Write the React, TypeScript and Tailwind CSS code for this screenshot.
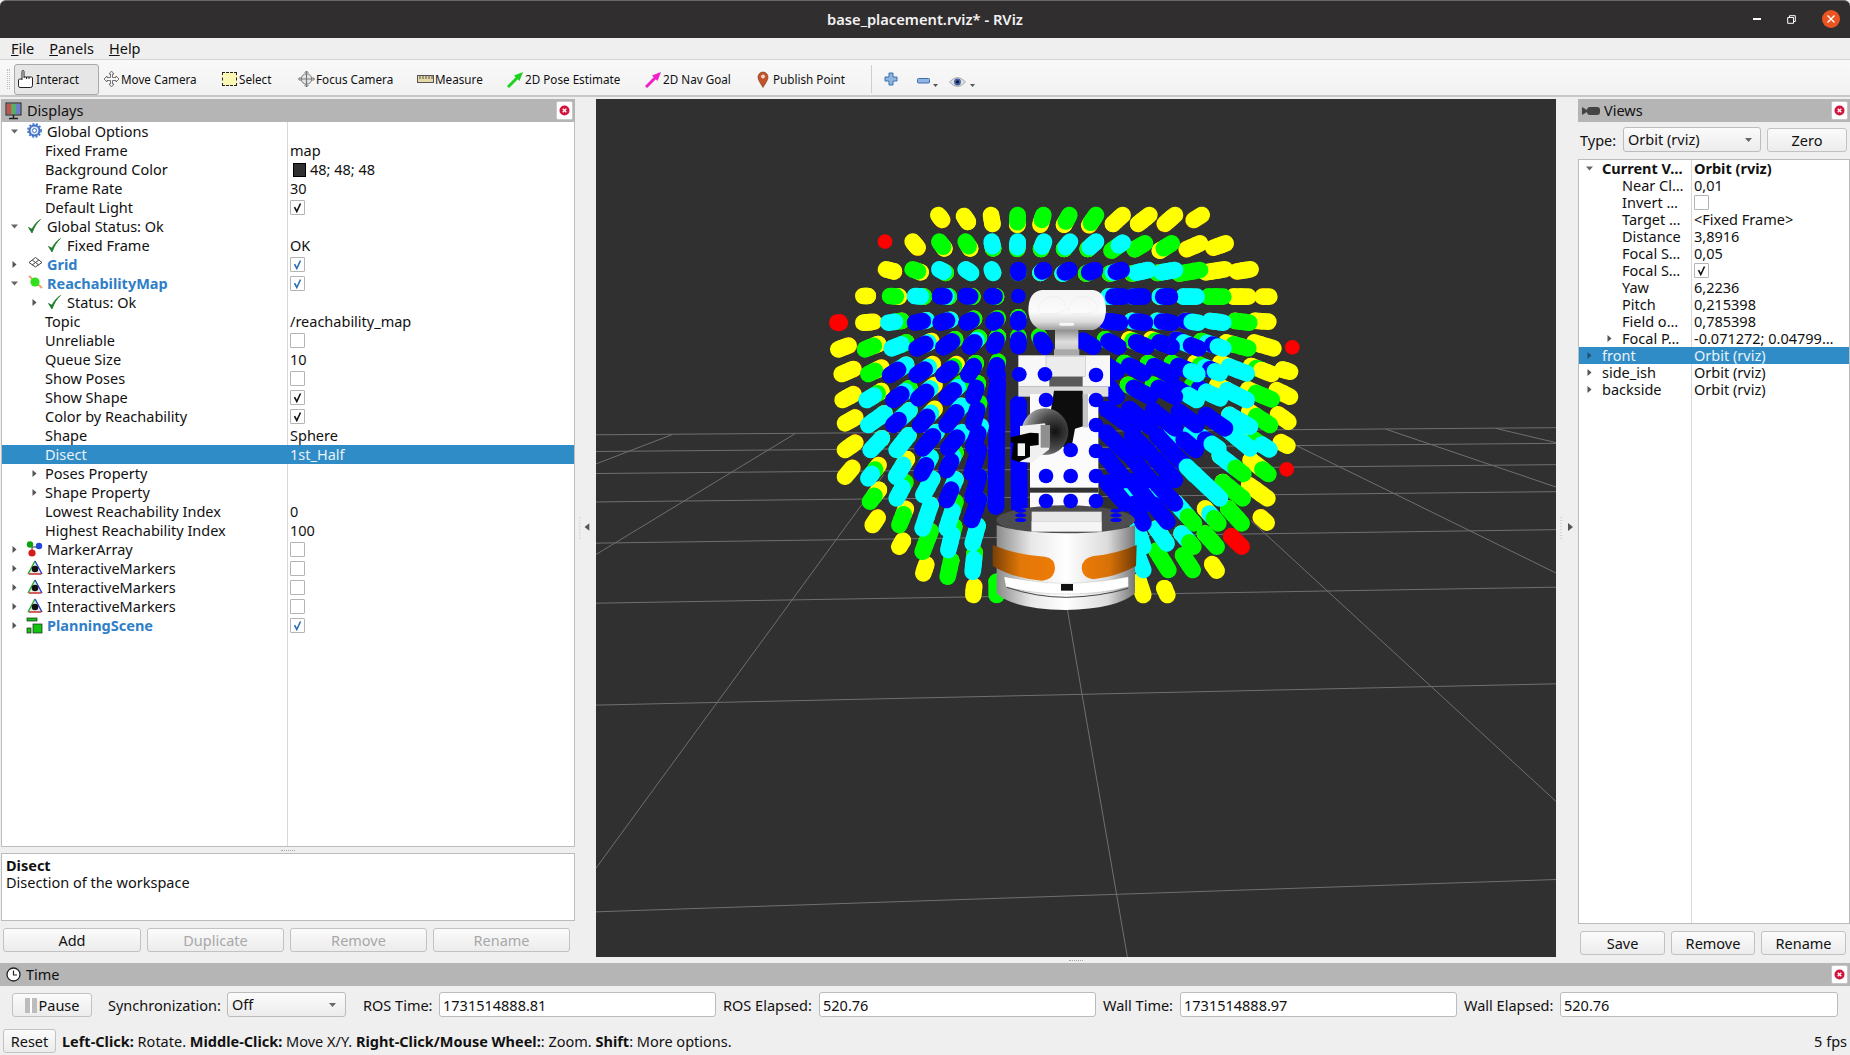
import { ReactNode } from "react";

// capsules are [frontX, frontY, backX, backY, colours back to front], in a 3x space of the 3d view
type Cap = [number, number, number, number, string];

const CAPS: Cap[] = [
  [415, 75, 428, 92, "ryyy"], [492, 78, 505, 98, "yyyy"], [573, 75, 578, 105, "yyy"], [653, 75, 652, 108, "yyggg"],
  [730, 75, 720, 108, "ryygg"], [808, 75, 790, 108, "yygg"], [888, 75, 865, 110, "ryggg"], [968, 75, 935, 105, "yyyy"],
  [1048, 75, 1010, 105, "yyyy"], [1125, 75, 1090, 105, "ryyy"], [1205, 75, 1178, 92, "ry"],
  [255, 155, 255, 155, "r"], [338, 155, 355, 175, "ryyy"], [418, 155, 435, 178, "yyggg"], [497, 155, 512, 178, "yygg"],
  [575, 155, 580, 178, "ygcc"], [653, 155, 652, 180, "rgccc"], [732, 155, 722, 180, "ygcc"], [810, 155, 790, 180, "ygccc"],
  [888, 155, 860, 180, "ygccc"], [968, 158, 930, 185, "rggc"], [1035, 160, 1000, 180, "yggg"], [1115, 160, 1075, 185, "yygg"],
  [1200, 160, 1155, 180, "ryyy"], [1277, 160, 1235, 175, "ryyy"],
  [258, 238, 285, 245, "yyyy"], [338, 238, 365, 248, "yygg"], [418, 238, 440, 250, "ygcc"], [497, 238, 515, 250, "gccc"],
  [575, 238, 580, 250, "gcc"], [655, 240, 655, 250, "gb"], [732, 240, 720, 250, "ycb"], [808, 240, 785, 252, "ycbb"],
  [885, 240, 855, 252, "ygbb"], [965, 240, 925, 252, "ygcbb"], [1045, 240, 990, 252, "ygccc"], [1125, 240, 1065, 250, "ygccc"],
  [1200, 240, 1130, 252, "yggg"], [1275, 238, 1210, 248, "yyyy"], [1352, 238, 1305, 245, "ryyy"],
  [190, 318, 205, 318, "yyyy"], [270, 318, 300, 320, "yygg"], [345, 318, 375, 320, "ygcc"], [420, 318, 450, 320, "ygcbb"],
  [497, 318, 520, 320, "ygbb"], [575, 318, 590, 320, "ygbb"], [655, 318, 655, 318, "b"], [968, 320, 920, 320, "ycbb"],
  [1030, 320, 995, 320, "cbb"], [1110, 320, 1075, 320, "ycbb"], [1190, 320, 1145, 320, "ccc"], [1270, 320, 1220, 320, "ggg"],
  [1345, 320, 1295, 320, "yyy"], [1408, 320, 1385, 320, "ry"],
  [112, 398, 120, 398, "rr"], [190, 398, 225, 395, "ryyy"], [265, 398, 310, 392, "ygc"], [345, 398, 385, 390, "ycbb"],
  [422, 398, 455, 388, "ycbb"], [500, 398, 525, 385, "ygbb"], [580, 398, 595, 383, "rgbb"], [655, 398, 655, 380, "ygbb"],
  [960, 398, 910, 392, "ybb"], [1035, 398, 990, 392, "ycbb"], [1115, 398, 1065, 392, "ycbb"], [1195, 398, 1150, 392, "ybc"],
  [1270, 398, 1225, 392, "rccc"], [1348, 398, 1300, 392, "yggg"], [1405, 395, 1360, 392, "yyy"],
  [115, 478, 150, 465, "ryyy"], [195, 478, 240, 460, "yygg"], [275, 475, 325, 455, "ygcc"], [350, 475, 400, 450, "rycbbb"],
  [430, 472, 470, 445, "ygbbb"], [510, 470, 540, 440, "ygcbb"], [582, 468, 595, 437, "ygbb"], [655, 468, 655, 435, "rgbb"],
  [735, 470, 715, 435, "rgbb"], [880, 470, 845, 450, "bbb"], [955, 470, 910, 445, "ygbbb"], [1040, 470, 980, 445, "rygbbb"],
  [1115, 470, 1045, 445, "rygbbb"], [1195, 475, 1120, 445, "ybcb"], [1270, 475, 1195, 450, "ygcbc"], [1345, 475, 1270, 455, "yygg"],
  [1420, 475, 1355, 455, "ryyy"], [1477, 472, 1477, 472, "r"],
  [125, 552, 165, 535, "ryyy"], [205, 552, 250, 530, "ryygg"], [270, 555, 325, 520, "ycb"], [350, 555, 405, 518, "rycbb"],
  [430, 555, 475, 518, "rygbbb"], [505, 555, 530, 515, "ygbbb"], [585, 548, 595, 510, "rgbb"], [950, 545, 910, 520, "bb"],
  [1030, 550, 965, 515, "ygbbb"], [1115, 555, 1035, 515, "ygbbb"], [1192, 552, 1105, 515, "ygbbc"], [1260, 550, 1175, 515, "rygcbc"],
  [1340, 550, 1250, 515, "rycc"], [1415, 552, 1345, 525, "yygyy"], [1470, 545, 1445, 538, "yyy"],
  [128, 630, 165, 610, "ryyy"], [200, 630, 250, 600, "yygcc"], [280, 630, 335, 590, "ygcbb"], [355, 625, 410, 580, "rycbb"],
  [440, 622, 490, 575, "ygcbb"], [520, 620, 535, 575, "ygbb"], [585, 625, 595, 575, "rbbb"], [950, 620, 915, 575, "bb"],
  [1050, 620, 975, 580, "ygbbb"], [1125, 620, 1050, 580, "ygbbb"], [1190, 630, 1105, 580, "ybbc"], [1260, 625, 1165, 580, "rgbcc"],
  [1340, 630, 1240, 580, "yycc"], [1415, 628, 1335, 595, "yygg"], [1470, 620, 1425, 598, "ryy"],
  [135, 700, 170, 680, "ryyy"], [205, 705, 260, 665, "yccc"], [280, 705, 335, 655, "yccb"], [360, 705, 410, 650, "rycbb"],
  [440, 705, 490, 640, "ycbb"], [520, 700, 540, 630, "rgbb"], [1000, 715, 910, 650, "bbb"], [1050, 710, 980, 650, "bbb"],
  [1125, 715, 1050, 655, "bbb"], [1190, 705, 1130, 660, "bbb"], [1275, 715, 1210, 670, "bbb"], [1350, 710, 1280, 670, "ycc"],
  [1410, 705, 1340, 660, "yygg"], [1465, 695, 1430, 670, "ryy"],
  [135, 780, 170, 755, "ryyy"], [212, 780, 250, 740, "ycc"], [290, 780, 330, 730, "yccc"], [368, 775, 415, 720, "ycbbb"],
  [445, 775, 490, 720, "rcbb"], [520, 770, 545, 700, "rcbb"], [980, 790, 910, 720, "bbb"], [1050, 790, 990, 730, "bbb"],
  [1125, 795, 1065, 730, "bbb"], [1187, 780, 1105, 710, "ycb"], [1255, 775, 1165, 715, "rccbc"], [1350, 775, 1260, 700, "ycc"],
  [1408, 778, 1330, 730, "yygc"], [1462, 767, 1440, 755, "ry"],
  [135, 860, 160, 830, "ryy"], [205, 865, 240, 820, "rygc"], [288, 860, 325, 800, "yycc"], [365, 850, 395, 795, "gcb"],
  [440, 840, 470, 780, "ygcbb"], [515, 850, 540, 770, "rbb"], [975, 870, 910, 790, "bb"], [1050, 870, 985, 790, "bb"],
  [1125, 870, 1060, 800, "bbb"], [1185, 855, 1130, 800, "bbc"], [1330, 852, 1250, 790, "yccg"], [1405, 852, 1345, 805, "yyyg"],
  [1460, 838, 1460, 838, "r"],
  [210, 935, 240, 895, "yyg"], [290, 925, 320, 870, "rgcc"], [370, 915, 400, 860, "ycc"], [440, 930, 470, 860, "ycb"],
  [518, 920, 540, 850, "gbb"], [975, 940, 915, 870, "bb"], [1050, 940, 990, 865, "bb"], [1125, 940, 1065, 875, "bb"],
  [1182, 1000, 1120, 930, "yccg"], [1260, 925, 1170, 840, "gcc"], [1328, 925, 1260, 870, "yggg"], [1402, 925, 1340, 880, "ryyy"],
  [218, 1005, 235, 980, "ryy"], [298, 1005, 320, 950, "rygg"], [368, 1015, 395, 935, "ycc"], [440, 1015, 470, 925, "rgcc"],
  [515, 990, 540, 920, "gbb"], [1030, 1000, 985, 900, "ycbb"], [1102, 995, 1010, 880, "ycb"], [1255, 1000, 1210, 950, "yycg"],
  [1325, 1000, 1280, 950, "yggg"], [1400, 998, 1380, 980, "ry"],
  [298, 1070, 310, 1050, "yy"], [368, 1085, 395, 1015, "rggg"], [445, 1080, 465, 1000, "ygcc"], [518, 1060, 535, 1000, "gcc"],
  [1030, 1070, 1010, 1010, "ycc"], [1100, 1060, 1065, 1010, "ycc"], [1180, 1070, 1140, 1025, "yccg"], [1250, 1070, 1210, 1025, "yggg"],
  [1325, 1070, 1290, 1035, "rrr"],
  [370, 1150, 380, 1120, "ryy"], [443, 1160, 455, 1105, "ygg"], [518, 1145, 525, 1080, "ygcc"], [1030, 1140, 1010, 1090, "cc"],
  [1105, 1140, 1065, 1075, "yggg"], [1178, 1140, 1145, 1090, "rggg"], [1250, 1142, 1235, 1120, "ry"],
  [520, 1215, 523, 1185, "ryy"], [590, 1215, 590, 1170, "gg"], [1030, 1215, 1015, 1170, "yyy"], [1102, 1215, 1092, 1192, "yy"],
  [588, 950, 593, 500, "bbb"], [658, 950, 655, 600, "bbb"],
];

const COLORS: Record<string, string> = { r: "#ff0000", y: "#ffff00", g: "#00ff00", c: "#00ffff", b: "#0000ff" };

const SORTED = [...CAPS].sort(
  (a, b) => Math.hypot(b[0] - 655, b[1] - 400) - Math.hypot(a[0] - 655, a[1] - 400)
);

const GRID_LINES = [
  [0, 98, 1568, 78], [0, 145, 1568, 122], [0, 207, 1568, 182], [0, 287, 1568, 258], [0, 403, 1568, 365],
  [0, 572, 1568, 527], [0, 859, 1568, 799], [0, 1441, 1568, 1350], [770, 590, 868, 1568], [0, 1318, 470, 210],
  [0, 435, 325, 95], [0, 180, 125, 97], [1070, 340, 1568, 1130], [1140, 125, 1568, 487], [1290, 82, 1568, 245],
  [1470, 80, 1568, 120],
];

const OVERLAY_DOTS = [
  [658, 553], [735, 553], [888, 555], [738, 630], [888, 630], [888, 705], [812, 780], [888, 783],
  [738, 858], [812, 858], [888, 858], [738, 933], [812, 933], [888, 933],
];

const Capsule = ({ c }: { c: Cap }) => {
  const [fx, fy, rawBx, rawBy, cols] = c;
  const n = cols.length;
  // the tail is pulled in a little, the wider stroke makes up for it
  const bx = fx + (rawBx - fx) * 0.88;
  const by = fy + (rawBy - fy) * 0.88;
  return (
    <g strokeWidth={n === 1 ? 44 : 50} strokeLinecap="round" fill="none">
      {cols.split("").map((k, i) => {
        const t0 = n === 1 ? 1 : Math.max(i - 1, 0) / (n - 1);
        const t1 = n === 1 ? 1 : i / (n - 1);
        return (
          <line
            key={i}
            x1={bx + (fx - bx) * t0}
            y1={by + (fy - by) * t0}
            x2={bx + (fx - bx) * t1}
            y2={by + (fy - by) * t1}
            stroke={COLORS[k]}
          />
        );
      })}
    </g>
  );
};

const Robot = () => (
  <g>
    <defs>
      <linearGradient id="headG" x1="0" y1="0" x2="0" y2="1">
        <stop offset="0" stopColor="#f4f4f4" />
        <stop offset="0.55" stopColor="#fbfbfb" />
        <stop offset="0.8" stopColor="#dadada" />
        <stop offset="1" stopColor="#9c9c9c" />
      </linearGradient>
      <linearGradient id="neckG" x1="0" y1="0" x2="0" y2="1">
        <stop offset="0" stopColor="#8c8c8c" />
        <stop offset="0.5" stopColor="#dedede" />
        <stop offset="1" stopColor="#bdbdbd" />
      </linearGradient>
      <linearGradient id="baseG" x1="0" y1="0" x2="1" y2="0">
        <stop offset="0" stopColor="#8b8b8b" />
        <stop offset="0.25" stopColor="#e8e8e8" />
        <stop offset="0.5" stopColor="#ffffff" />
        <stop offset="0.8" stopColor="#dcdcdc" />
        <stop offset="1" stopColor="#777777" />
      </linearGradient>
      <linearGradient id="orangeL" x1="0" y1="0" x2="1" y2="0">
        <stop offset="0" stopColor="#7a3f05" />
        <stop offset="0.45" stopColor="#e27808" />
        <stop offset="1" stopColor="#ee7b06" />
      </linearGradient>
      <linearGradient id="orangeR" x1="0" y1="0" x2="1" y2="0">
        <stop offset="0" stopColor="#ee7b06" />
        <stop offset="0.5" stopColor="#d77206" />
        <stop offset="1" stopColor="#6e3905" />
      </linearGradient>
      <radialGradient id="armG" cx="0.72" cy="0.5" r="0.72">
        <stop offset="0" stopColor="#111" />
        <stop offset="0.5" stopColor="#4a4a4a" />
        <stop offset="0.85" stopColor="#8e8e8e" />
        <stop offset="1" stopColor="#c4c4c4" />
      </radialGradient>
    </defs>
    {/* head and neck */}
    <rect x={765} y={418} width={70} height={75} fill="url(#neckG)" />
    <path d="M725 300H880Q918 305 918 362Q915 408 880 420H725Q688 408 685 362Q685 305 725 300Z" fill="url(#headG)" />
    <path d="M715 358Q720 320 765 320Q795 325 798 358Q785 372 730 372Q718 370 715 358Z" fill="none" stroke="#c9c9c9" strokeDasharray="2 2" />
    <path d="M805 358Q815 320 855 320Q890 325 892 358Q885 372 825 372Q810 370 805 358Z" fill="none" stroke="#c9c9c9" strokeDasharray="2 2" />
    <rect x={778} y={398} width={44} height={9} rx={4} fill="#f7f7f7" />
    <rect x={762} y={478} width={76} height={18} fill="#a9a9a9" />
    {/* torso */}
    <rect x={655} y={496} width={275} height={94} fill="#f7f7f7" />
    <rect x={738} y={500} width={118} height={60} fill="#ececec" stroke="#999" />
    <rect x={748} y={560} width={100} height={30} fill="#5a5a5a" />
    <rect x={655} y={590} width={270} height={30} fill="#dcdcdc" />
    <rect x={690} y={612} width={205} height={358} fill="#fbfbfb" />
    <rect x={690} y={893} width={205} height={15} fill="#333" />
    <rect x={692} y={968} width={210} height={55} fill="#e4e4e4" />
    <rect x={695} y={1000} width={205} height={24} fill="#f3f3f3" stroke="#aaa" />
    {/* arm */}
    <path d="M762 602H848L852 708L825 716L815 770H775L740 740Z" fill="#0d0d0d" />
    <rect x={848} y={612} width={16} height={100} fill="#c4c4c4" />
    <ellipse cx={735} cy={725} rx={70} ry={70} fill="url(#armG)" />
    <path d="M660 708L735 700L748 778L695 818L660 815Z" fill="#f0f0f0" />
    <rect x={722} y={705} width={28} height={68} fill="#8f8f8f" />
    <path d="M632 742L690 728L716 730V765L690 768V800L655 816L635 808L640 760L632 755Z" fill="#000" />
    <rect x={653} y={760} width={22} height={38} fill="#f2f2f2" />
    {/* base */}
    <ellipse cx={797} cy={990} rx={208} ry={44} fill="#4d4d4d" />
    <path d="M590 1005Q660 1030 797 1030Q935 1030 1005 1005V1210Q950 1258 797 1260Q640 1258 590 1210Z" fill="url(#baseG)" />
    <rect x={695} y={965} width={210} height={58} fill="#e6e6e6" />
    <rect x={695} y={995} width={210} height={30} fill="#f5f5f5" stroke="#bbb" />
    <path d="M578 1065Q660 1098 735 1100Q765 1105 765 1135Q762 1170 725 1172Q640 1165 578 1128Z" fill="url(#orangeL)" />
    <path d="M1010 1065Q950 1092 880 1098Q845 1105 845 1135Q848 1165 880 1168Q950 1160 1008 1128Z" fill="url(#orangeR)" />
    <path d="M612 1160Q720 1180 800 1180Q900 1178 985 1160V1190Q900 1212 800 1212Q700 1212 618 1190Z" fill="#fff" stroke="#777" strokeDasharray="3 2" />
    <path d="M620 1192Q710 1222 800 1222Q900 1220 985 1195" fill="none" stroke="#444" strokeWidth={3} />
    <rect x={783} y={1182} width={36} height={20} fill="#111" />
    {[962, 976, 990].map((y) => (
      <g key={y}>
        <ellipse cx={662} cy={y} rx={17} ry={6} fill="#0000ff" />
        <ellipse cx={948} cy={y} rx={17} ry={6} fill="#0000ff" />
      </g>
    ))}
  </g>
);

const Scene = () => (
  <svg width={960} height={858} viewBox="0 0 960 858" className="block">
    <g transform="translate(0,301) scale(0.6122,0.3552)" stroke="#6f6f6f" fill="none">
      {GRID_LINES.map((l, i) => (
        <line key={i} x1={l[0]} y1={l[1]} x2={l[2]} y2={l[3]} vectorEffect="non-scaling-stroke" />
      ))}
    </g>
    <g transform="translate(204,91) scale(0.33333)">
      {SORTED.map((c, i) => (
        <Capsule key={i} c={c} />
      ))}
      <Robot />
      {OVERLAY_DOTS.map((d, i) => (
        <circle key={i} cx={d[0]} cy={d[1]} r={22} fill="#0000ff" />
      ))}
    </g>
  </svg>
);

const CloseBtn = () => (
  <span className="flex h-[19px] w-[17px] items-center justify-center rounded-[2px] border border-[#c8c8c8] bg-white">
    <svg width="11" height="11" viewBox="0 0 11 11">
      <circle cx="5.5" cy="5.5" r="5" fill="#d3143c" />
      <path d="M3.7 3.7l3.6 3.6M7.3 3.7L3.7 7.3" stroke="#fff" strokeWidth="1.3" />
    </svg>
  </span>
);

const Arrow = ({ open, light }: { open?: boolean; light?: boolean }) =>
  open ? (
    <svg width="9" height="9" viewBox="0 0 9 9">
      <path d="M1 2.5h7L4.5 6.5z" fill="#666" />
    </svg>
  ) : (
    <svg width="9" height="9" viewBox="0 0 9 9">
      <path d="M2.5 1v7L6.5 4.5z" fill={light ? "#1f4f73" : "#555"} />
    </svg>
  );

const Tick = () => (
  <svg width="15" height="17" viewBox="0 0 15 17">
    <path d="M1.5 9.5L5 15C7 9.5 9.5 5 13.5 1.5C9.5 4 6.8 7.5 5 11.2z" fill="#1c7a26" stroke="#1c7a26" strokeWidth="0.8" />
  </svg>
);

const Box = ({ on, blue }: { on?: boolean; blue?: boolean }) => (
  <span className="flex h-[15px] w-[15px] items-center justify-center rounded-[1px] border border-[#b4b4b4] bg-white">
    {on && (
      <svg width="11" height="11" viewBox="0 0 11 11">
        <path d="M2.5 5.2L4.8 9.5L8.5 1.5" fill="none" stroke={blue ? "#2c6fb3" : "#111"} strokeWidth="1.6" />
      </svg>
    )}
  </span>
);

const GearIcon = () => (
  <svg width="15" height="15" viewBox="0 0 15 15">
    <circle cx="7.5" cy="7.5" r="5" fill="#dfe9f8" stroke="#3f72c4" strokeWidth="2" />
    <circle cx="7.5" cy="7.5" r="6.6" fill="none" stroke="#3f72c4" strokeWidth="1.6" strokeDasharray="2 1.6" />
    <circle cx="7.5" cy="7.5" r="2" fill="#fff" stroke="#3f72c4" />
  </svg>
);

const GridIcon = () => (
  <svg width="15" height="13" viewBox="0 0 15 13">
    <path d="M7.5 1.5L14 6.5L7.5 11L1 6.5zM4.2 4L10.8 9M10.8 4L4.2 9" fill="none" stroke="#444" strokeWidth="1" />
  </svg>
);

const ReachIcon = () => (
  <svg width="15" height="15" viewBox="0 0 15 15">
    <path d="M1 1L14 13" stroke="#f0a070" strokeWidth="2" />
    <circle cx="7" cy="7" r="4.6" fill="#2fe01a" />
  </svg>
);

const MarkerArrayIcon = () => (
  <svg width="17" height="17" viewBox="0 0 17 17">
    <path d="M6 6L6 11M6 6L13 6" stroke="#333" />
    <circle cx="4" cy="3.5" r="3.2" fill="#0ea30e" />
    <circle cx="13" cy="5" r="3.2" fill="#2347d8" />
    <circle cx="6" cy="12" r="3.6" fill="#d61a1a" />
  </svg>
);

const InteractiveIcon = () => (
  <svg width="16" height="16" viewBox="0 0 16 16">
    <path d="M8 1L15 14H1z" fill="#e9e9e9" stroke="#888" strokeWidth="0.6" />
    <path d="M8 1L1 14" stroke="#19b32b" strokeWidth="1.3" />
    <path d="M8 1L15 14" stroke="#2140d8" strokeWidth="1.3" />
    <path d="M2 14H14" stroke="#d81f1f" strokeWidth="1.3" />
    <circle cx="8" cy="9" r="3.3" fill="#111" />
  </svg>
);

const PlanningIcon = () => (
  <svg width="17" height="17" viewBox="0 0 17 17">
    <rect x="1" y="1" width="10" height="3" fill="#12c312" stroke="#222" strokeWidth="0.7" />
    <rect x="1" y="11" width="4" height="5" fill="#12c312" stroke="#222" strokeWidth="0.7" />
    <rect x="7" y="7" width="9" height="9" fill="#12c312" stroke="#222" strokeWidth="0.7" />
  </svg>
);

type TreeRow = {
  name: string;
  value?: ReactNode;
  left: number; // px to the label
  arrow?: "open" | "closed";
  arrowAt?: number;
  icon?: ReactNode;
  iconAt?: number;
  blue?: boolean;
  selected?: boolean;
};

const DISPLAY_ROWS: TreeRow[] = [
  { name: "Global Options", left: 47, arrow: "open", arrowAt: 8, icon: <GearIcon />, iconAt: 25 },
  { name: "Fixed Frame", left: 45, value: "map" },
  {
    name: "Background Color",
    left: 45,
    value: (
      <span className="flex items-center gap-[4px]">
        <span className="ml-[3px] h-[14px] w-[13px] border border-black bg-[#303030]" />
        48; 48; 48
      </span>
    ),
  },
  { name: "Frame Rate", left: 45, value: "30" },
  { name: "Default Light", left: 45, value: <Box on /> },
  { name: "Global Status: Ok", left: 47, arrow: "open", arrowAt: 8, icon: <Tick />, iconAt: 25 },
  { name: "Fixed Frame", left: 67, value: "OK", icon: <Tick />, iconAt: 45 },
  { name: "Grid", left: 47, arrow: "closed", arrowAt: 8, icon: <GridIcon />, iconAt: 26, blue: true, value: <Box on blue /> },
  { name: "ReachabilityMap", left: 47, arrow: "open", arrowAt: 8, icon: <ReachIcon />, iconAt: 26, blue: true, value: <Box on blue /> },
  { name: "Status: Ok", left: 67, arrow: "closed", arrowAt: 28, icon: <Tick />, iconAt: 45 },
  { name: "Topic", left: 45, value: "/reachability_map" },
  { name: "Unreliable", left: 45, value: <Box /> },
  { name: "Queue Size", left: 45, value: "10" },
  { name: "Show Poses", left: 45, value: <Box /> },
  { name: "Show Shape", left: 45, value: <Box on /> },
  { name: "Color by Reachability", left: 45, value: <Box on /> },
  { name: "Shape", left: 45, value: "Sphere" },
  { name: "Disect", left: 45, value: "1st_Half", selected: true },
  { name: "Poses Property", left: 45, arrow: "closed", arrowAt: 28 },
  { name: "Shape Property", left: 45, arrow: "closed", arrowAt: 28 },
  { name: "Lowest Reachability Index", left: 45, value: "0" },
  { name: "Highest Reachability Index", left: 45, value: "100" },
  { name: "MarkerArray", left: 47, arrow: "closed", arrowAt: 8, icon: <MarkerArrayIcon />, iconAt: 24, value: <Box /> },
  { name: "InteractiveMarkers", left: 47, arrow: "closed", arrowAt: 8, icon: <InteractiveIcon />, iconAt: 25, value: <Box /> },
  { name: "InteractiveMarkers", left: 47, arrow: "closed", arrowAt: 8, icon: <InteractiveIcon />, iconAt: 25, value: <Box /> },
  { name: "InteractiveMarkers", left: 47, arrow: "closed", arrowAt: 8, icon: <InteractiveIcon />, iconAt: 25, value: <Box /> },
  { name: "PlanningScene", left: 47, arrow: "closed", arrowAt: 8, icon: <PlanningIcon />, iconAt: 24, blue: true, value: <Box on blue /> },
];

const DisplayRow = ({ r }: { r: TreeRow }) => (
  <div className={`relative flex h-[19px] items-center ${r.selected ? "bg-[#308cc6] text-[#e8f2f9]" : ""}`}>
    {r.arrow && (
      <span className="absolute top-[5px]" style={{ left: r.arrowAt }}>
        <Arrow open={r.arrow === "open"} />
      </span>
    )}
    {r.icon && (
      <span className="absolute top-[1px]" style={{ left: r.iconAt }}>
        {r.icon}
      </span>
    )}
    <span
      className={`w-[285px] shrink-0 whitespace-nowrap ${r.blue ? "font-bold text-[#2f7ec8]" : ""}`}
      style={{ paddingLeft: r.left - 2 }}
    >
      {r.name}
    </span>
    <span className="pl-[3px]">{r.value}</span>
  </div>
);

const VIEW_ROWS: { n: string; v: ReactNode; lvl: number; arrow?: "open" | "closed"; sel?: boolean; bold?: boolean }[] = [
  { n: "Current V…", v: "Orbit (rviz)", lvl: 0, arrow: "open", bold: true },
  { n: "Near Cl…", v: "0,01", lvl: 1 },
  { n: "Invert …", v: <Box />, lvl: 1 },
  { n: "Target …", v: "<Fixed Frame>", lvl: 1 },
  { n: "Distance", v: "3,8916", lvl: 1 },
  { n: "Focal S…", v: "0,05", lvl: 1 },
  { n: "Focal S…", v: <Box on />, lvl: 1 },
  { n: "Yaw", v: "6,2236", lvl: 1 },
  { n: "Pitch", v: "0,215398", lvl: 1 },
  { n: "Field o…", v: "0,785398", lvl: 1 },
  { n: "Focal P…", v: "-0.071272; 0.04799…", lvl: 1, arrow: "closed" },
  { n: "front", v: "Orbit (rviz)", lvl: 0, arrow: "closed", sel: true },
  { n: "side_ish", v: "Orbit (rviz)", lvl: 0, arrow: "closed" },
  { n: "backside", v: "Orbit (rviz)", lvl: 0, arrow: "closed" },
];

const QtButton = ({ children, w, disabled }: { children: ReactNode; w: string; disabled?: boolean }) => (
  <button
    className={`flex h-[24px] items-center justify-center rounded-[3px] border border-[#c2c2c2] bg-gradient-to-b from-[#fbfbfb] to-[#ececec] pt-[1px] ${w} ${
      disabled ? "text-[#a8a8a8]" : "text-[#111]"
    }`}
  >
    {children}
  </button>
);

const ComboArrow = () => (
  <svg width="9" height="6" viewBox="0 0 9 6">
    <path d="M1 1h7L4.5 5z" fill="#666" />
  </svg>
);

const ToolBtn = ({ icon, label, w, active }: { icon: ReactNode; label: string; w: string; active?: boolean }) => (
  <button
    className={`flex h-[31px] items-center whitespace-nowrap ${w} ${
      active ? "rounded-[3px] border border-[#a9a9a9] bg-[#e6e6e6] pl-[2px]" : "pl-[3px]"
    }`}
  >
    <span className="flex w-[18px] shrink-0 justify-center">{icon}</span>
    <span className="pl-[1px] pt-[1px]">{label}</span>
  </button>
);

const PoseArrow = ({ color }: { color: string }) => (
  <svg width="17" height="17" viewBox="0 0 17 17">
    <path d="M1 16L11 6" stroke={color} strokeWidth="3" />
    <path d="M16 1L7 4.5L12.5 10z" fill={color} />
  </svg>
);

const TimeField = ({ w, value }: { w: string; value: string }) => (
  <div className={`flex h-[25px] items-center rounded-[3px] border border-[#bcbcbc] bg-white pl-[3px] pt-[1px] ${w}`}>{value}</div>
);

const ViewGutterDots = ({ side }: { side: "left" | "right" }) => (
  <svg width="22" height="30" viewBox="0 0 22 30">
    <path d="M5 5v22" stroke="#bcbcbc" strokeDasharray="1 2" />
    {side === "left" ? <path d="M15 11v8l-5-4z" fill="#555" /> : <path d="M12 11v8l5-4z" fill="#555" />}
  </svg>
);

const HandleDots = () => <span className="h-px w-[14px] border-t border-dotted border-[#a8a8a8]" />;

export default function App() {
  return (
    <div className="flex h-[1055px] w-[1850px] flex-col overflow-hidden bg-[#efefef] font-['Noto_Sans',sans-serif] text-[14.5px] leading-none text-[#111]">
      {/* title bar */}
      <div className="relative flex h-[38px] shrink-0 items-center justify-center rounded-t-[6px] border-t border-[#6b6966] bg-[#302e2e] text-[14.7px] font-semibold text-[#f2f2f2]">
        base_placement.rviz* - RViz
        <div className="absolute right-[10px] top-[9px] flex items-center gap-[26px]">
          <span className="h-[1.5px] w-[8px] bg-white" />
          <svg width="9" height="9" viewBox="0 0 9 9">
            <path d="M2.5 2.5V.7H8.3V6.5H6.5M.7 2.5H6.5V8.3H.7z" fill="none" stroke="#fff" />
          </svg>
          <span className="flex h-[18px] w-[18px] items-center justify-center rounded-full bg-[#e95420]">
            <svg width="10" height="10" viewBox="0 0 10 10">
              <path d="M1.5 1.5l7 7M8.500 1.500l-7 7" stroke="#fff" strokeWidth="1.4" />
            </svg>
          </span>
        </div>
      </div>

      {/* menu bar */}
      <div className="flex h-[22px] shrink-0 items-center gap-[15px] border-b border-[#d4d4d4] pl-[11px] text-[14.5px]">
        <span><span className="underline">F</span>ile</span>
        <span><span className="underline">P</span>anels</span>
        <span><span className="underline">H</span>elp</span>
      </div>

      {/* toolbar */}
      <div className="flex h-[37px] shrink-0 items-center border-b-2 border-[#c8c8c8] bg-gradient-to-b from-[#f9f9f9] to-[#f2f2f2] pt-[3px] text-[11.7px]">
        <span className="ml-[7px] mr-[4px] h-[20px] w-[3px] border-x border-dotted border-[#bdbdbd]" />
        <ToolBtn
          w="w-[85px]"
          active
          label="Interact"
          icon={
            <svg width="18" height="20" viewBox="0 0 18 20">
              <path d="M5 11V2.5a1 1 0 012 0V9m0-1h2.5V10m0-2H12v2m0-2h2.5a1 1 0 011 1v7.500q0 2-2 2H3q-1.500 0-1.500-2V11q0-1.500 3.500-1" fill="#fff" stroke="#222" strokeWidth="1" />
            </svg>
          }
        />
        <ToolBtn
          w="w-[118px]"
          label="Move Camera"
          icon={
            <svg width="17" height="18" viewBox="0 0 17 18">
              <path d="M8.500 1l2.500 3H9.500v3.500H13V6l3 3-3 3v-1.500H9.500V14H11l-2.500 3L6 14h1.500v-3.500H4V12L1 9l3-3v1.500h3.500V4H6z" fill="#f4f4f4" stroke="#666" strokeWidth="0.9" />
            </svg>
          }
        />
        <ToolBtn
          w="w-[77px]"
          label="Select"
          icon={<span className="h-[14px] w-[15px] border border-dashed border-[#222] bg-[#fcf7b5]" />}
        />
        <ToolBtn
          w="w-[119px]"
          label="Focus Camera"
          icon={
            <svg width="17" height="18" viewBox="0 0 17 18">
              <circle cx="8.500" cy="9" r="5.200" fill="#e6e6e6" stroke="#777" />
              <path d="M8.500 1v16M.5 9h16" stroke="#777" strokeWidth="1.2" />
              <path d="M6.500 3L8.500 1l2 2M6.500 15l2 2 2-2M2.500 7L.5 9l2 2M14.500 7l2 2-2 2" fill="none" stroke="#777" />
            </svg>
          }
        />
        <ToolBtn
          w="w-[90px]"
          label="Measure"
          icon={
            <svg width="17" height="8" viewBox="0 0 17 8">
              <rect x="0.5" y="0.5" width="16" height="7" fill="#e6d9a6" stroke="#555" />
              <path d="M3 1v3M6 1v3M9 1v3M12 1v3M15 1v3" stroke="#555" />
            </svg>
          }
        />
        <ToolBtn w="w-[138px]" label="2D Pose Estimate" icon={<PoseArrow color="#1fd11f" />} />
        <ToolBtn w="w-[110px]" label="2D Nav Goal" icon={<PoseArrow color="#f01fc8" />} />
        <ToolBtn
          w="w-[120px]"
          label="Publish Point"
          icon={
            <svg width="12" height="17" viewBox="0 0 12 17">
              <path d="M6 16.500C3 11.500 1 9 1 6a5 5 0 0110 0c0 3-2 5.500-5 10.500z" fill="#c2532b" stroke="#7a3a1e" strokeWidth="0.6" />
              <circle cx="6" cy="5.500" r="1.900" fill="#f3d7c8" />
            </svg>
          }
        />
        <span className="h-[28px] w-px bg-[#cfcfcf]" />
        <span className="ml-[12px]">
          <svg width="14" height="14" viewBox="0 0 14 14">
            <path d="M5 1h4v4h4v4H9v4H5V9H1V5h4z" fill="#8fb5e0" stroke="#3c6fb0" />
          </svg>
        </span>
        <span className="ml-[19px] flex items-end">
          <svg width="13" height="14" viewBox="0 0 13 14">
            <rect x="0.5" y="4.500" width="12" height="4.500" rx="1" fill="#8fb5e0" stroke="#3c6fb0" />
          </svg>
          <svg width="8" height="18" viewBox="0 0 8 18" className="ml-[1px]">
            <path d="M2 14h5l-2.500 3z" fill="#555" />
          </svg>
        </span>
        <span className="ml-[10px] flex items-end">
          <svg width="17" height="12" viewBox="0 0 17 12">
            <path d="M.5 6Q8.500-3 16.500 6Q8.500 15 .5 6z" fill="#dedede" stroke="#aaa" />
            <circle cx="8.500" cy="6" r="3.400" fill="#3c5fa8" />
            <circle cx="8.500" cy="6" r="1.400" fill="#111" />
          </svg>
          <svg width="8" height="18" viewBox="0 0 8 18" className="ml-[2px]">
            <path d="M2 14h5l-2.500 3z" fill="#555" />
          </svg>
        </span>
      </div>

      {/* main area */}
      <div className="flex h-[866px] shrink-0 pt-[2px]">
        {/* displays panel */}
        <div className="flex w-[575px] shrink-0 flex-col pl-[1px]">
          <div className="flex h-[23px] items-center bg-[#b5b5b5] pl-[4px] pr-[2px]">
            <svg width="17" height="18" viewBox="0 0 17 18">
              <rect x="1" y="1" width="15" height="12" fill="#999" stroke="#222" />
              <rect x="2" y="2" width="4.500" height="10" fill="#c8524a" />
              <rect x="6.500" y="2" width="4.500" height="10" fill="#55b06a" />
              <rect x="11" y="2" width="4" height="10" fill="#6a7fc8" />
              <path d="M8.500 13v3M4 16.500h9" stroke="#222" strokeWidth="1.500" />
            </svg>
            <span className="ml-[5px] flex-1">Displays</span>
            <CloseBtn />
          </div>
          <div className="relative h-[725px] overflow-hidden border-x border-b border-[#bcbcbc] bg-white pt-0">
            <span className="absolute bottom-0 left-[285px] top-0 w-px bg-[#d8d8d8]" />
            {DISPLAY_ROWS.map((r, i) => (
              <DisplayRow key={i} r={r} />
            ))}
          </div>
          <div className="flex h-[6px] items-center justify-center">
            <HandleDots />
          </div>
          <div className="h-[68px] border border-[#bcbcbc] bg-white pl-[4px] pt-[3px] leading-[17px]">
            <div className="font-bold">Disect</div>
            <div>Disection of the workspace</div>
          </div>
          <div className="mt-[7px] flex gap-[6px] pl-[2px]">
            <QtButton w="w-[138px]">Add</QtButton>
            <QtButton w="w-[137px]" disabled>Duplicate</QtButton>
            <QtButton w="w-[137px]" disabled>Remove</QtButton>
            <QtButton w="w-[137px]" disabled>Rename</QtButton>
          </div>
        </div>

        {/* 3d view */}
        <div className="flex w-[21px] shrink-0 items-center pb-[8px]">
          <ViewGutterDots side="left" />
        </div>
        <div className="w-[960px] shrink-0">
          <div className="h-[858px] overflow-hidden bg-[#303030]">
            <Scene />
          </div>
          <div className="flex h-[6px] items-center justify-center">
            <HandleDots />
          </div>
        </div>
        <div className="flex w-[22px] shrink-0 items-center pb-[8px]">
          <ViewGutterDots side="right" />
        </div>

        {/* views panel */}
        <div className="flex w-[272px] shrink-0 flex-col">
          <div className="flex h-[23px] items-center bg-[#b5b5b5] pl-[4px] pr-[2px]">
            <svg width="18" height="10" viewBox="0 0 18 10">
              <path d="M0 1l5 3V6L0 9z" fill="#444" />
              <rect x="5" y="1" width="13" height="8" rx="3" fill="#444" />
            </svg>
            <span className="ml-[4px] flex-1">Views</span>
            <CloseBtn />
          </div>
          <div className="mt-[5px] flex h-[25px] items-center pl-[2px] pr-[3px]">
            <span className="w-[43px] pt-[1px]">Type:</span>
            <div className="flex h-[25px] w-[138px] items-center justify-between rounded-[3px] border border-[#bcbcbc] bg-gradient-to-b from-[#fbfbfb] to-[#ececec] pl-[4px] pr-[7px]">
              Orbit (rviz)
              <ComboArrow />
            </div>
            <QtButton w="ml-[6px] w-[80px]">Zero</QtButton>
          </div>
          <div className="relative mt-[7px] h-[765px] border border-[#bcbcbc] bg-white">
            <span className="absolute bottom-0 left-[112px] top-0 w-px bg-[#d8d8d8]" />
            {VIEW_ROWS.map((r, i) => (
              <div key={i} className={`relative flex h-[17px] items-center ${r.sel ? "bg-[#308cc6] text-[#e8f2f9]" : ""}`}>
                {r.arrow && (
                  <span className="absolute top-[4px]" style={{ left: r.lvl === 0 ? 6 : 26 }}>
                    <Arrow open={r.arrow === "open"} light={r.sel} />
                  </span>
                )}
                <span
                  className={`w-[112px] shrink-0 whitespace-nowrap ${r.bold ? "font-bold" : ""}`}
                  style={{ paddingLeft: r.lvl === 0 ? 23 : 43 }}
                >
                  {r.n}
                </span>
                <span className={`whitespace-nowrap pl-[3px] ${r.bold ? "font-bold" : ""}`}>{r.v}</span>
              </div>
            ))}
          </div>
          <div className="mt-[7px] flex gap-[6px] pl-[2px]">
            <QtButton w="w-[85px]">Save</QtButton>
            <QtButton w="w-[84px]">Remove</QtButton>
            <QtButton w="w-[85px]">Rename</QtButton>
          </div>
        </div>
      </div>

      {/* time panel */}
      <div className="flex h-[23px] shrink-0 items-center bg-[#b5b5b5] pl-[6px] pr-[2px]">
        <svg width="15" height="15" viewBox="0 0 15 15">
          <circle cx="7.500" cy="7.500" r="6.500" fill="#fff" stroke="#222" strokeWidth="1.300" />
          <path d="M7.500 3.500v4.500H11" fill="none" stroke="#222" strokeWidth="1.200" />
        </svg>
        <span className="ml-[5px] flex-1">Time</span>
        <CloseBtn />
      </div>
      <div className="mt-[6px] flex h-[25px] shrink-0 items-center">
        <div className="ml-[12px]">
          <QtButton w="w-[80px]">
            <span className="mr-[2px] h-[15px] w-[12px] border-x-[5px] border-[#bdbdbd] bg-white" />
            Pause
          </QtButton>
        </div>
        <span className="ml-[16px] w-[119px] whitespace-nowrap pt-[2px]">Synchronization:</span>
        <div className="flex h-[25px] w-[119px] items-center justify-between rounded-[3px] border border-[#bcbcbc] bg-gradient-to-b from-[#fbfbfb] to-[#ececec] pl-[4px] pr-[8px]">
          Off
          <ComboArrow />
        </div>
        <span className="ml-[17px] w-[76px] whitespace-nowrap pt-[2px]">ROS Time:</span>
        <TimeField w="w-[277px]" value="1731514888.81" />
        <span className="ml-[7px] w-[96px] whitespace-nowrap pt-[2px]">ROS Elapsed:</span>
        <TimeField w="w-[277px]" value="520.76" />
        <span className="ml-[7px] w-[77px] whitespace-nowrap pt-[2px]">Wall Time:</span>
        <TimeField w="w-[277px]" value="1731514888.97" />
        <span className="ml-[7px] w-[96px] whitespace-nowrap pt-[2px]">Wall Elapsed:</span>
        <TimeField w="w-[278px]" value="520.76" />
      </div>

      {/* status bar */}
      <div className="mt-[11px] flex h-[25px] shrink-0 items-center pl-[3px] pr-[3px]">
        <QtButton w="w-[53px]">Reset</QtButton>
        <span className="ml-[6px] flex-1 whitespace-nowrap pt-[1px]">
          <b>Left-Click:</b> Rotate. <b>Middle-Click:</b> Move X/Y. <b>Right-Click/Mouse Wheel:</b>: Zoom. <b>Shift</b>: More options.
        </span>
        <span className="pt-[1px]">5 fps</span>
      </div>
    </div>
  );
}
